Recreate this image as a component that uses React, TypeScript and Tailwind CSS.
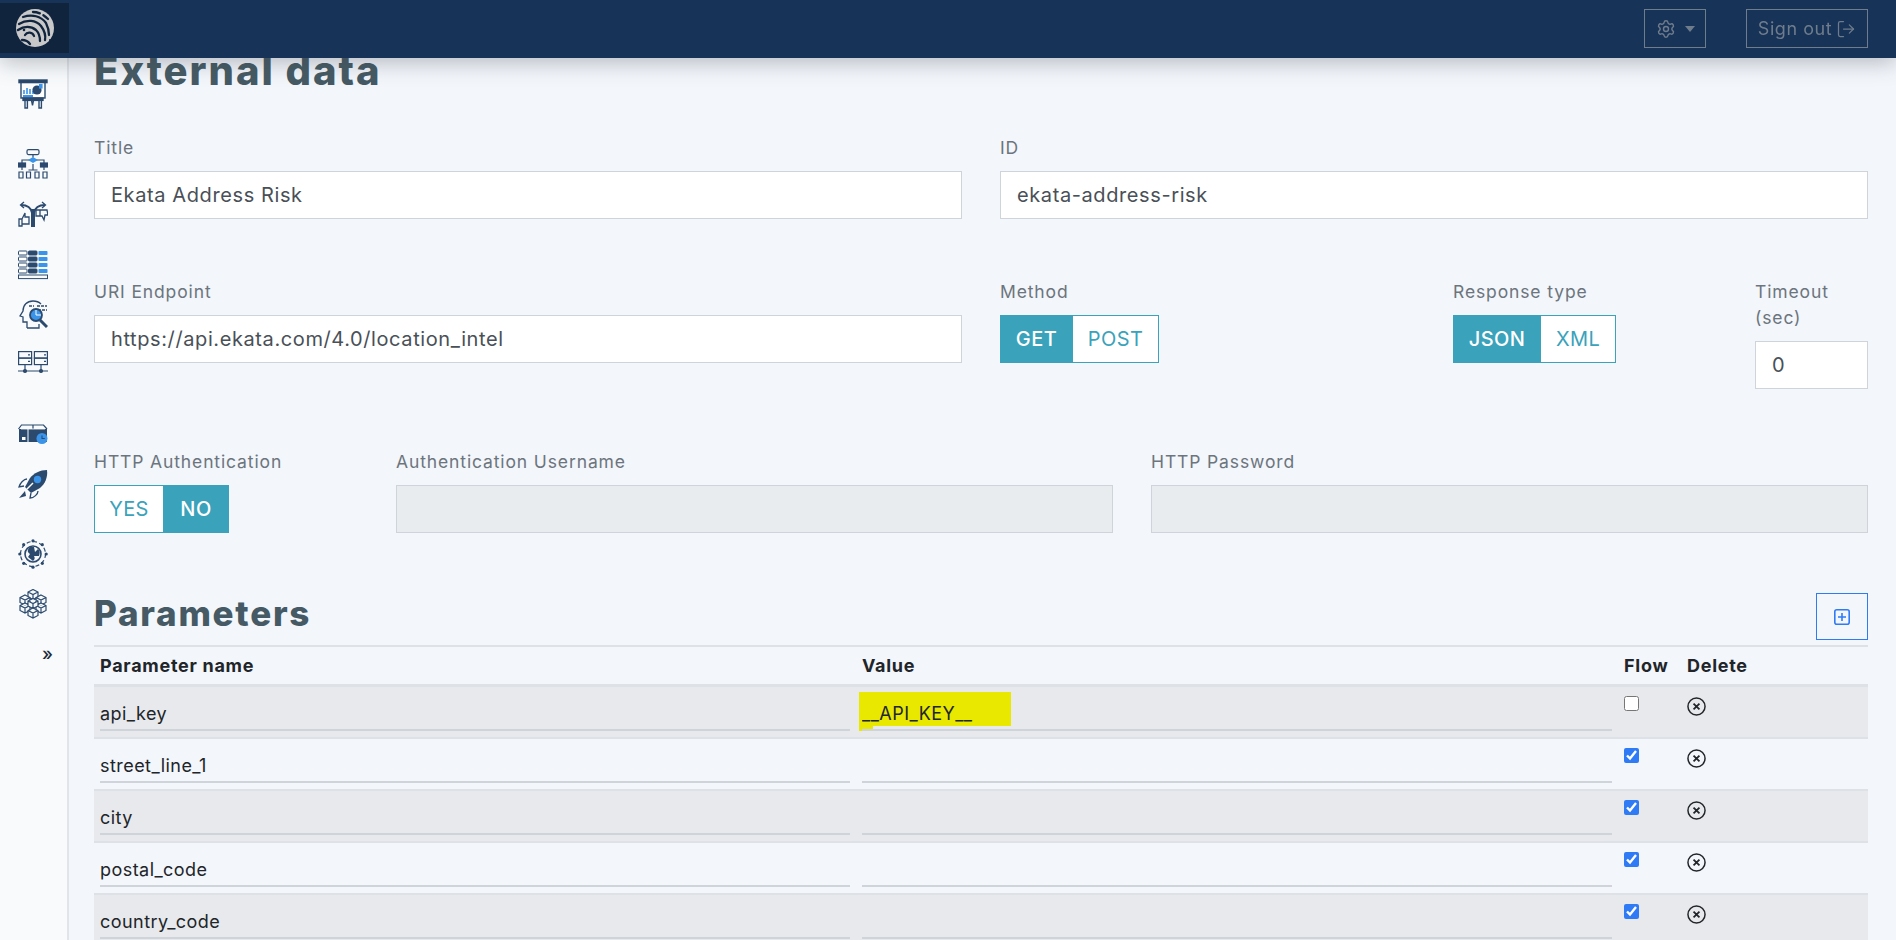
import { LogOut, Settings } from 'lucide-react';

const dark = '#2c4a6e';
const blue = '#3a94ea';

function Logo() {
  return (
    <svg viewBox="0 0 38 38" className="w-[38px] h-[38px]">
      <circle cx="19" cy="19" r="19" fill="#c9c9c9" />
      <g fill="none" stroke="#10243e" strokeWidth="2.300" strokeLinecap="round">
        <path d="M9 26a5 5 0 0 1 9 1" />
        <path d="M2 21c6-4 13-4 18 0 3 3 4 7 4 11" />
        <path d="M3 15c8-5 17-4 22 2 3 4 5 9 4 14" />
        <path d="M7 8c9-3 18-1 23 6 2 4 3 8 3 12" />
        <path d="M17 3c6 0 11 3 15 7" strokeDasharray="7 4" />
        <path d="M6 31c3 0 6 1 8 4" />
      </g>
      <circle cx="8" cy="21" r="1.300" fill="#10243e" />
      <circle cx="34" cy="31" r="1" fill="#10243e" />
    </svg>
  );
}

function BoardIcon() {
  return (
    <svg viewBox="0 0 30 30" className="w-[30px] h-[30px]" fill="none" stroke={dark} strokeWidth="1.400">
      <rect x="1" y="1" width="28" height="2.600" fill={dark} />
      <rect x="3" y="3.600" width="24" height="15.400" fill="#fff" />
      <path d="M6 15v-4M9 15V9M12 15v-5M15 15v-3" stroke={blue} strokeWidth="1.600" />
      <path d="M5 17h10" stroke={blue} strokeWidth="2" />
      <circle cx="19" cy="11" r="4.600" fill={dark} stroke="none" />
      <path d="M21 5h3.600v4.600H21z" fill={blue} stroke="none" />
      <rect x="5" y="19" width="20" height="2.400" fill={dark} />
      <path d="M7 21.400V29h2.400v-7.600M21 21.400V29h2.400v-7.600M13.500 21.400l1 5 1-5" />
    </svg>
  );
}

function FlowIcon() {
  return (
    <svg viewBox="0 0 30 30" className="w-[30px] h-[30px]" fill="none" stroke={dark} strokeWidth="1.200">
      <rect x="9" y="0.600" width="12" height="5" rx="1.500" />
      <path d="M15 5.600v3M15 15v6M4 14v-3h22v3M4 18v3M26 18v3M10.500 21h9" />
      <path d="M15 8l5 3-5 3-5-3z" fill={blue} stroke="none" />
      <rect x="0.500" y="14" width="7" height="4" fill={dark} />
      <rect x="22.500" y="14" width="7" height="4" fill={dark} />
      <path d="M1 23h4v6H1zM8.500 23h4v6h-4zM17 23h4v6h-4zM25 23h4v6h-4z" />
    </svg>
  );
}

function ChoiceIcon() {
  return (
    <svg viewBox="0 0 30 30" className="w-[30px] h-[30px]" fill="none" stroke={dark} strokeWidth="1.300">
      <rect x="13" y="10" width="4" height="18" fill={dark} stroke="none" />
      <path d="M14 14C13 8 9 6 3 6M16 14c1-6 5-8 11-8" strokeWidth="1.800" />
      <path d="M6 3L2.500 6 6 9M24 3l3.500 3L24 9" />
      <path d="M1 20h3v7H1zM4 20l3-6v4h4v7H4" />
      <path d="M18 11h4v6h-4zM22 11h7l1 5h-3l-1 5-2-4h-2" />
    </svg>
  );
}

function GridIcon() {
  const rows = [1, 7, 13, 19];
  return (
    <svg viewBox="0 0 30 30" className="w-[30px] h-[30px]" fill="none" stroke={dark} strokeWidth="1">
      {rows.map((y) => (
        <g key={y}>
          <rect x="0.500" y={y} width="8.500" height="4" rx="0.800" fill="#fff" />
          <rect x="10.500" y={y} width="8.500" height="4" rx="0.800" fill={dark} />
          <rect x="20.500" y={y} width="9" height="4" rx="0.800" fill={blue} stroke="none" />
        </g>
      ))}
      <rect x="0.500" y="25" width="29" height="3.600" />
    </svg>
  );
}

function HeadIcon() {
  return (
    <svg viewBox="0 0 30 30" className="w-[30px] h-[30px]" fill="none" stroke={dark} strokeWidth="1.300">
      <path d="M9 29v-6H5v-5l-3-1 3-5c0-6 4-10 10-10 3 0 6 1 8 3" />
      <path d="M9 29h12v-4" />
      <path d="M11 7h5M19 7h10M20 11h9" strokeDasharray="3 1" />
      <circle cx="18" cy="16" r="6" fill={blue} strokeWidth="1.800" />
      <path d="M18 16v-5M18 16h5" stroke="#fff" strokeWidth="1" />
      <path d="M22 21l7 7" strokeWidth="3" />
    </svg>
  );
}

function ServerIcon() {
  return (
    <svg viewBox="0 0 30 24" className="w-[30px] h-[24px]" fill="none" stroke={dark} strokeWidth="1.200">
      <rect x="0.600" y="0.600" width="13" height="6.500" />
      <rect x="0.600" y="7.100" width="13" height="6.500" />
      <rect x="16.400" y="0.600" width="13" height="6.500" />
      <rect x="16.400" y="7.100" width="13" height="6.500" />
      <path d="M10 3.800h2M10 10.300h2M26 3.800h2M26 10.300h2M7 13.600V20M23 13.600V20M0 20h30" />
      <circle cx="7" cy="20" r="1.500" fill={dark} />
      <circle cx="23" cy="20" r="1.500" fill={dark} />
    </svg>
  );
}

function BoxIcon() {
  return (
    <svg viewBox="0 0 30 20" className="w-[30px] h-[20px]" fill="none">
      <path d="M1 5h28v13H1z" fill={dark} />
      <path d="M10 5v13" stroke="#f8fafc" strokeWidth="1" />
      <path d="M0.500 5l3-4h22l3.500 4M15 1v4" stroke={dark} strokeWidth="1.200" />
      <path d="M3 5h24" stroke="#f8fafc" strokeWidth="0.800" />
      <rect x="4" y="13" width="3.500" height="3" fill="#fff" />
      <circle cx="24" cy="14.500" r="5.500" fill={blue} />
      <path d="M24 11.500v3h2.800" stroke={dark} strokeWidth="1.100" />
    </svg>
  );
}

function RocketIcon() {
  return (
    <svg viewBox="0 0 30 30" className="w-[30px] h-[30px]" fill="none">
      <path d="M29 1c-7 0-13 3-17 8l-5 9 6 6 9-5c5-4 8-11 7-18z" fill={dark} />
      <circle cx="19.500" cy="10.500" r="3.700" fill={blue} />
      <path d="M9 10C6 10 2 14 1 18l5-1M20 22c0 3-4 7-8 7l1-5" stroke={dark} strokeWidth="1.300" />
      <path d="M7 22l-6 7 7-2" fill={dark} />
      <path d="M9 20l6-6" stroke="#fff" strokeWidth="1.500" />
    </svg>
  );
}

function GlobeIcon() {
  const dots = [[15, 1.800], [15, 28.200], [1.800, 15], [28.200, 15], [5.700, 5.700], [24.300, 5.700], [5.700, 24.300], [24.300, 24.300]];
  return (
    <svg viewBox="0 0 30 30" className="w-[30px] h-[30px]" fill="none" stroke={dark} strokeWidth="1.200">
      <circle cx="15" cy="15" r="12.500" strokeDasharray="4 2.500" />
      <circle cx="15" cy="15" r="8" strokeWidth="1.600" />
      <path d="M12 8c-3 3-3 5 0 7l-2 3 5 4c2-2 2-3 1-5l5 0c1-3 1-5-1-7l-3 3-1-5z" fill={dark} stroke="none" />
      {dots.map(([cx, cy]) => (
        <circle key={`${cx}-${cy}`} cx={cx} cy={cy} r="1.600" fill={dark} stroke="none" />
      ))}
    </svg>
  );
}

function Cube({ x, y }: { x: number; y: number }) {
  return (
    <path
      d={`M${x} ${y}l5 2.500v5l-5 2.500-5-2.500v-5zM${x - 5} ${y + 2.500}l5 2.500 5-2.500M${x} ${y + 5}v5`}
      fill="#f7f9fc"
    />
  );
}

function CubesIcon() {
  return (
    <svg viewBox="0 0 30 30" className="w-[30px] h-[30px]" fill="none" stroke={dark} strokeWidth="1.200">
      <Cube x={15} y={0.500} />
      <Cube x={7} y={6} />
      <Cube x={23} y={6} />
      <Cube x={7} y={14} />
      <Cube x={23} y={14} />
      <Cube x={15} y={9.500} />
      <Cube x={15} y={19} />
    </svg>
  );
}

const labelClass = 'block text-[17.5px] leading-[26px] text-[#6c757d] tracking-[0.05em] mb-[10px]';
const inputClass =
  'block w-full h-[48px] border border-[#ced4da] bg-white px-[16px] text-[20px] text-[#495057] tracking-[0.03em] outline-none';
const disabledClass = 'block w-full h-[48px] border border-[#ced4da] bg-[#e9ecef] outline-none';
const headingClass = 'font-extrabold text-[#455a64] tracking-[0.05em]';

function Toggle({ options, active, widths }: { options: string[]; active: string; widths: string[] }) {
  return (
    <div className="flex">
      {options.map((o, i) => (
        <button
          key={o}
          className={`h-[48px] border border-[#3aa2ba] text-[20px] tracking-[0.02em] ${widths[i]} ${
            o === active ? 'bg-[#3aa2ba] text-white font-medium' : 'bg-white text-[#3aa2ba]'
          } ${i > 0 ? 'border-l-0' : ''}`}
        >
          {o}
        </button>
      ))}
    </div>
  );
}

const params = [
  { name: 'api_key', value: '__API_KEY__', flow: false },
  { name: 'street_line_1', value: '', flow: true },
  { name: 'city', value: '', flow: true },
  { name: 'postal_code', value: '', flow: true },
  { name: 'country_code', value: '', flow: true },
];

export default function App() {
  return (
    <div className="h-screen overflow-hidden flex bg-[#f3f6fb] font-['Inter','Liberation_Sans',sans-serif]">
      <header className="fixed top-0 left-0 right-0 z-10 h-[58px] bg-[#173358] flex items-start justify-between shadow-[0_4px_22px_rgba(60,70,80,0.35)]">
        <div className="mt-[3px] w-[69px] h-[50px] bg-[#10243e] flex items-center justify-center">
          <Logo />
        </div>
        <div className="flex mt-[9px] mr-[28px] gap-[40px] text-[#6f7c8c]">
          <button className="w-[62px] h-[39px] border border-[#6f7c8c] flex items-center justify-center gap-[9px]">
            <Settings size={20} strokeWidth={1.700} />
            <span className="w-0 h-0 border-x-[5px] border-x-transparent border-t-[6px] border-t-[#6f7c8c]" />
          </button>
          <button className="w-[122px] h-[39px] border border-[#6f7c8c] flex items-center justify-center gap-[4px] text-[18px] tracking-[0.03em]">
            Sign out
            <LogOut size={20} strokeWidth={1.500} />
          </button>
        </div>
      </header>

      <aside className="w-[69px] shrink-0 bg-[#f8fafc] border-r-2 border-[#e1e4e9] flex flex-col items-center pt-[79px] pr-[2px]">
        <BoardIcon />
        <div className="mt-[40px]"><FlowIcon /></div>
        <div className="mt-[20px]"><ChoiceIcon /></div>
        <div className="mt-[21px]"><GridIcon /></div>
        <div className="mt-[19px]"><HeadIcon /></div>
        <div className="mt-[22px]"><ServerIcon /></div>
        <div className="mt-[49px]"><BoxIcon /></div>
        <div className="mt-[25px]"><RocketIcon /></div>
        <div className="mt-[40px]"><GlobeIcon /></div>
        <div className="mt-[20px]"><CubesIcon /></div>
        <div className="self-end mr-[12px] mt-[24px] text-[18px] leading-[22px] font-medium text-[#1d2b3a]">»</div>
      </aside>

      <main className="flex-1 min-w-0 pl-[25px] pr-[28px] pt-[50px]">
        <h1 className={`text-[40px] leading-[42px] ${headingClass} mb-[43px]`}>External data</h1>

        <div className="grid grid-cols-12 gap-x-[38px] mb-[60px]">
          <div className="col-span-6">
            <label className={labelClass}>Title</label>
            <input className={inputClass} defaultValue="Ekata Address Risk" readOnly />
          </div>
          <div className="col-span-6">
            <label className={labelClass}>ID</label>
            <input className={inputClass} defaultValue="ekata-address-risk" readOnly />
          </div>
        </div>

        <div className="grid grid-cols-12 gap-x-[38px] mb-[60px]">
          <div className="col-span-6">
            <label className={labelClass}>URI Endpoint</label>
            <input className={inputClass} defaultValue="https://api.ekata.com/4.0/location_intel" readOnly />
          </div>
          <div className="col-span-3">
            <label className={labelClass}>Method</label>
            <Toggle options={['GET', 'POST']} active="GET" widths={['w-[73px]', 'w-[86px]']} />
          </div>
          <div className="col-span-2">
            <label className={labelClass}>Response type</label>
            <Toggle options={['JSON', 'XML']} active="JSON" widths={['w-[88px]', 'w-[75px]']} />
          </div>
          <div className="col-span-1">
            <label className={labelClass}>Timeout (sec)</label>
            <input className={inputClass} defaultValue="0" readOnly />
          </div>
        </div>

        <div className="grid grid-cols-12 gap-x-[38px] mb-[60px]">
          <div className="col-span-2">
            <label className={labelClass}>HTTP Authentication</label>
            <Toggle options={['YES', 'NO']} active="NO" widths={['w-[70px]', 'w-[65px]']} />
          </div>
          <div className="col-span-5">
            <label className={labelClass}>Authentication Username</label>
            <input className={disabledClass} disabled />
          </div>
          <div className="col-span-5">
            <label className={labelClass}>HTTP Password</label>
            <input className={disabledClass} disabled />
          </div>
        </div>

        <div className="flex items-start justify-between h-[47px] mb-[5px]">
          <h2 className={`text-[35px] leading-[41px] ${headingClass}`}>Parameters</h2>
          <button className="w-[52px] h-[47px] border border-[#2f7bf6] flex items-center justify-center">
            <svg viewBox="0 0 16 16" className="w-[16px] h-[16px]" fill="none" stroke="#2f7bf6" strokeWidth="1.600">
              <rect x="0.800" y="0.800" width="14.400" height="14.400" rx="2" />
              <path d="M8 4v8M4 8h8" />
            </svg>
          </button>
        </div>

        <table className="w-full table-fixed border-separate border-spacing-0 text-[#212529]">
          <colgroup>
            <col className="w-[762px]" />
            <col className="w-[762px]" />
            <col className="w-[63px]" />
            <col />
          </colgroup>
          <thead>
            <tr className="text-left text-[18px] tracking-[0.04em]">
              {['Parameter name', 'Value', 'Flow', 'Delete'].map((h) => (
                <th key={h} className="h-[42px] px-[6px] font-bold border-t-2 border-b-[3px] border-[#dee2e6] whitespace-nowrap">
                  {h}
                </th>
              ))}
            </tr>
          </thead>
          <tbody>
            {params.map((p, i) => {
              const td = `align-top px-[6px] pb-[6px] ${i > 0 ? 'border-t-2 border-[#dee2e6]' : ''} ${i % 2 === 0 ? 'bg-[#e8e9ec]' : ''}`;
              return (
                <tr key={p.name}>
                  <td className={`${td} pt-[10px]`}>
                    <input
                      className="block w-full h-[34px] bg-transparent border-b-2 border-[#ced4da] text-[18px] tracking-[0.025em] outline-none"
                      defaultValue={p.name}
                      readOnly
                    />
                  </td>
                  <td className={`${td} pt-[10px]`}>
                    <div className="relative">
                      {p.value && (
                        <>
                          <span className="absolute left-[-3px] top-[-5px] w-[152px] h-[34px] bg-[#e8e800]" />
                          <span className="absolute left-[-3px] top-[-2px] w-[14px] h-[36px] bg-[#e8e800]" />
                        </>
                      )}
                      <input
                        className="relative block w-full h-[34px] bg-transparent border-b-2 border-[#ced4da] text-[18px] tracking-[0.025em] outline-none"
                        defaultValue={p.value}
                        readOnly
                      />
                    </div>
                  </td>
                  <td className={`${td} pt-[9px]`}>
                    <input type="checkbox" className="block w-[15px] h-[15px] accent-[#2f7bf6]" defaultChecked={p.flow} readOnly />
                  </td>
                  <td className={`${td} pt-[10px]`}>
                    <svg viewBox="0 0 18 18" className="w-[19px] h-[19px]" fill="none" stroke="#212529">
                      <circle cx="9" cy="9" r="8.100" strokeWidth="1.400" />
                      <path d="M6.200 6.200l5.600 5.600M11.800 6.200l-5.600 5.600" strokeWidth="1.700" />
                    </svg>
                  </td>
                </tr>
              );
            })}
          </tbody>
        </table>
      </main>
    </div>
  );
}
